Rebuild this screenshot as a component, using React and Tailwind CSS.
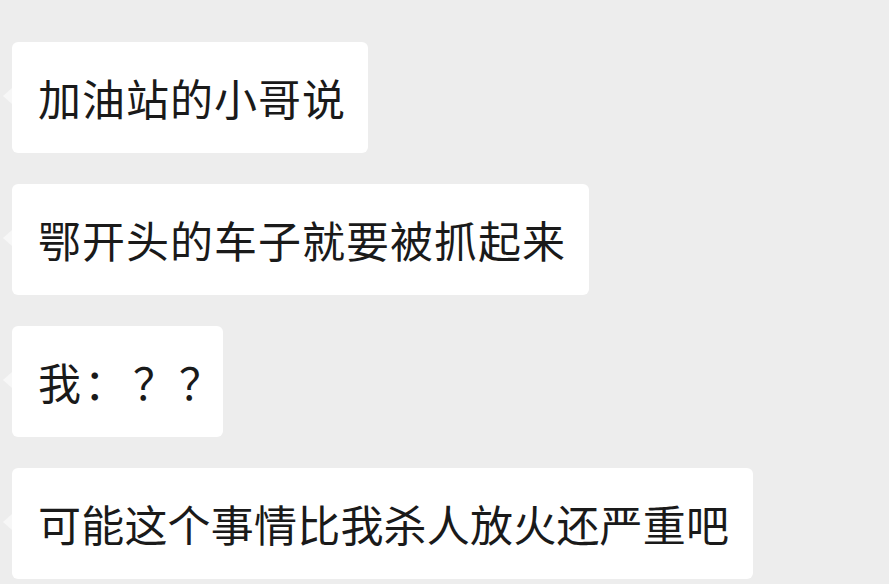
import React from "react";

function Bubble({ w, children, track }) {
  return (
    <div
      className={`relative bg-white rounded-[6px] h-[111px] pl-[26px] flex items-center text-[43px] leading-none text-[#1a1a1a] ${w} ${track}`}
    >
      <span className="absolute left-[-9px] top-[46px] w-0 h-0 border-y-[8px] border-y-transparent border-r-[9px] border-r-[#f7f7f7]" />
      <span className="whitespace-nowrap flex">{children}</span>
    </div>
  );
}

export default function App() {
  return (
    <div
      className="w-[889px] h-[584px] overflow-hidden bg-[#ededed] flex flex-col items-start gap-[31px] pt-[42px] pl-[12px]"
      style={{ fontFamily: '"Noto Sans CJK SC", "Noto Sans", sans-serif' }}
    >
      <Bubble w="w-[356px]" track="tracking-[1px]">加油站的小哥说</Bubble>
      <Bubble w="w-[577px]" track="tracking-[1px]">鄂开头的车子就要被抓起来</Bubble>
      <Bubble w="w-[211px]" track="tracking-normal">
        <span>我</span>
        <span className="ml-[3px]">：</span>
        <span className="ml-[6px]">？</span>
        <span className="ml-[3px]">？</span>
      </Bubble>
      <Bubble w="w-[741px]" track="tracking-[0.2px]">可能这个事情比我杀人放火还严重吧</Bubble>
    </div>
  );
}
